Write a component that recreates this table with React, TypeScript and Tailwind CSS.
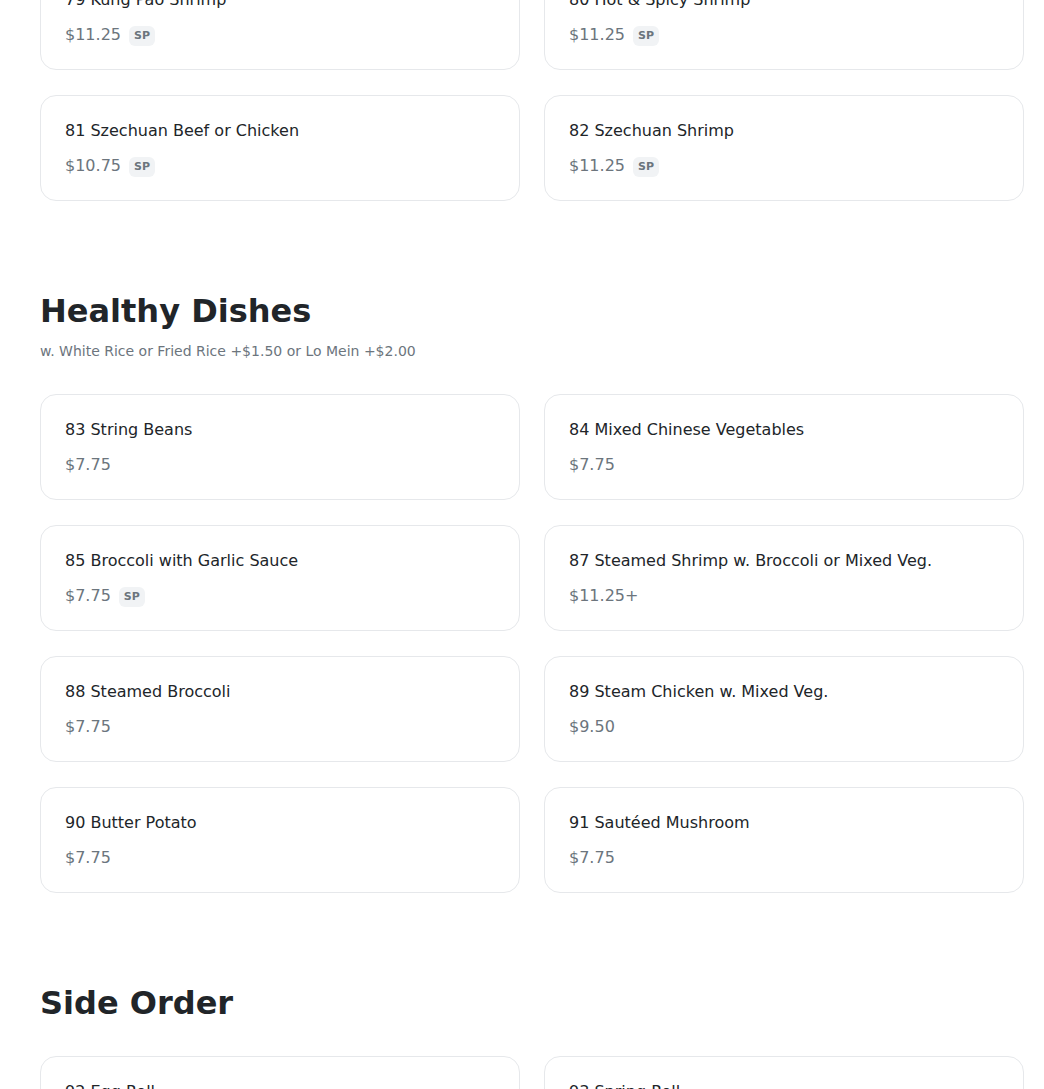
import React from "react";

interface Dish {
  name: string;
  price: string;
  sp?: boolean;
}

interface Section {
  title?: string;
  note?: string;
  dishes: Dish[];
}

const sections: Section[] = [
  {
    // tail of the previous section, scrolled partly off screen
    dishes: [
      { name: "79 Kung Pao Shrimp", price: "$11.25", sp: true },
      { name: "80 Hot & Spicy Shrimp", price: "$11.25", sp: true },
      { name: "81 Szechuan Beef or Chicken", price: "$10.75", sp: true },
      { name: "82 Szechuan Shrimp", price: "$11.25", sp: true },
    ],
  },
  {
    title: "Healthy Dishes",
    note: "w. White Rice or Fried Rice +$1.50 or Lo Mein +$2.00",
    dishes: [
      { name: "83 String Beans", price: "$7.75" },
      { name: "84 Mixed Chinese Vegetables", price: "$7.75" },
      { name: "85 Broccoli with Garlic Sauce", price: "$7.75", sp: true },
      { name: "87 Steamed Shrimp w. Broccoli or Mixed Veg.", price: "$11.25+" },
      { name: "88 Steamed Broccoli", price: "$7.75" },
      { name: "89 Steam Chicken w. Mixed Veg.", price: "$9.50" },
      { name: "90 Butter Potato", price: "$7.75" },
      { name: "91 Sautéed Mushroom", price: "$7.75" },
    ],
  },
  {
    title: "Side Order",
    dishes: [
      { name: "92 Egg Roll", price: "$1.75" },
      { name: "93 Spring Roll", price: "$1.75" },
    ],
  },
];

const DishCard: React.FC<Dish> = ({ name, price, sp }) => (
  <div className="bg-white border border-[#e6e8eb] rounded-2xl px-6 pt-[25px] pb-[22px]">
    <h3 className="text-base leading-5 text-[#212529]">{name}</h3>
    <div className="flex items-center mt-[13px] h-6">
      <span className="text-base leading-6 text-[#6c757d]">{price}</span>
      {sp && (
        <span className="ml-2 mt-px px-[5px] py-[3px] rounded-md bg-[#f1f3f5] text-[11px] leading-[14px] font-bold text-[#6c757d]">
          SP
        </span>
      )}
    </div>
  </div>
);

export default function App() {
  return (
    <div
      className="bg-white overflow-hidden h-[1089px]"
      style={{ fontFamily: '"DejaVu Sans", Verdana, sans-serif' }}
    >
      <div className="pl-10 pr-5 -mt-[36px]">
        {sections.map((s, i) => (
          <section key={i} className={i > 0 ? "mt-[90px]" : ""}>
            {s.title && (
              <h2 className="text-[32px] leading-10 font-bold text-[#212529] mb-2.5">{s.title}</h2>
            )}
            {s.note && <p className="text-sm leading-[21px] text-[#6c757d]">{s.note}</p>}
            <div
              className={`grid grid-cols-2 gap-x-6 gap-y-[25px] ${
                s.note ? "mt-8" : s.title ? "mt-[33px]" : ""
              }`}
            >
              {s.dishes.map((d) => (
                <DishCard key={d.name} {...d} />
              ))}
            </div>
          </section>
        ))}
      </div>
    </div>
  );
}
